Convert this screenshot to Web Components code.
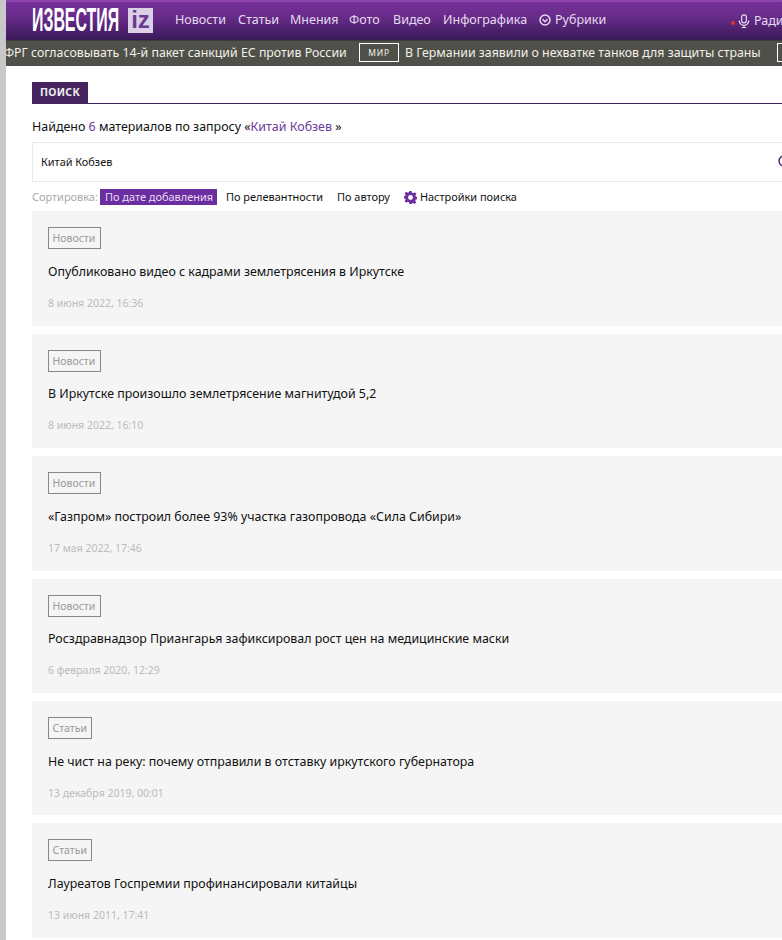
<!DOCTYPE html>
<html lang="ru">
<head>
<meta charset="utf-8">
<title>Поиск</title>
<style>
  html, body { margin: 0; height: 940px; overflow: hidden; background: #fff; }
  body { font-family: "Noto Sans", "Open Sans", sans-serif; }
</style>
</head>
<body>
<iz-page>
  <iz-header></iz-header>
  <iz-ticker></iz-ticker>
  <iz-search query="Китай Кобзев" count="6">
    <iz-card section="Новости" date="8 июня 2022, 16:36">Опубликовано видео с кадрами землетрясения в Иркутске</iz-card>
    <iz-card section="Новости" date="8 июня 2022, 16:10">В Иркутске произошло землетрясение магнитудой 5,2</iz-card>
    <iz-card section="Новости" date="17 мая 2022, 17:46">«Газпром» построил более 93% участка газопровода «Сила Сибири»</iz-card>
    <iz-card section="Новости" date="6 февраля 2020, 12:29">Росздравнадзор Приангарья зафиксировал рост цен на медицинские маски</iz-card>
    <iz-card section="Статьи" date="13 декабря 2019, 00:01">Не чист на реку: почему отправили в отставку иркутского губернатора</iz-card>
    <iz-card section="Статьи" date="13 июня 2011, 17:41">Лауреатов Госпремии профинансировали китайцы</iz-card>
  </iz-search>
</iz-page>
<script>
class IzPage extends HTMLElement {
  constructor() {
    super();
    this.attachShadow({ mode: 'open' });
    this.shadowRoot.innerHTML = `
      <style>
        :host {
          display: block;
          width: 1100px;
          min-height: 940px;
          border-left: 6px solid #c8c8c8;
          background: #fff;
        }
      </style>
      <slot></slot>`;
  }
}

class IzHeader extends HTMLElement {
  constructor() {
    super();
    this.attachShadow({ mode: 'open' });
    this.shadowRoot.innerHTML = `
      <style>
        :host {
          display: flex;
          align-items: center;
          height: 40px;
          box-sizing: border-box;
          padding-left: 26px;
          border-top: 2px solid #8d44ad;
          background: linear-gradient(#76319a 0%, #6a2c8c 35%, #3a1a58 100%);
          color: #e6daf0;
          font-size: 12.5px;
        }
        .logo {
          display: flex;
          align-items: center;
          width: 143px;
          margin-top: -2px;
        }
        .word {
          display: block;
          width: 96px;
          color: #fff;
          font: bold 30px/26px "Liberation Sans", sans-serif;
          white-space: nowrap;
          transform-origin: left center;
          transform: scaleX(.53) scaleY(1.12);
        }
        .iz {
          display: block;
          width: 25px;
          height: 25px;
          background: #dcd0e6;
          color: #6a3a90;
          font: bold 24px/24px "Liberation Sans", sans-serif;
          text-align: center;
        }
        nav { display: flex; align-items: center; margin-top: -3px; }
        nav span { white-space: nowrap; }
        .rub { display: flex; align-items: center; gap: 4px; }
        .radio { display: flex; align-items: center; gap: 4px; position: absolute; left: 731px; top: 12px; }
        .dot { width: 4px; height: 4px; border-radius: 50%; background: #e23030; margin-top: 4px; margin-right: -1px; }
      </style>
      <div class="logo"><span class="word">ИЗВЕСТИЯ</span><span class="iz">iz</span></div>
      <nav>
        <span style="width:63px">Новости</span>
        <span style="width:52px">Статьи</span>
        <span style="width:59px">Мнения</span>
        <span style="width:44px">Фото</span>
        <span style="width:50px">Видео</span>
        <span style="width:96px">Инфографика</span>
        <span class="rub">
          <svg width="12" height="12" viewBox="0 0 12 12" fill="none" stroke="#e6daf0" stroke-width="1.5"><circle cx="6" cy="6" r="5"/><path d="M3.500 5.200 6 7.700l2.500-2.500"/></svg>
          Рубрики
        </span>
      </nav>
      <div class="radio">
        <i class="dot"></i>
        <svg width="12" height="14" viewBox="0 0 12 14" fill="none" stroke="#e6daf0" stroke-width="1.2"><rect x="3.600" y=".8" width="4.800" height="8" rx="2.400"/><path d="M1.200 6.500a4.800 4.800 0 0 0 9.600 0M6 11.300v2.200M3.800 13.500h4.400"/></svg>
        <span>Радио</span>
      </div>`;
  }
}

class IzTicker extends HTMLElement {
  constructor() {
    super();
    this.attachShadow({ mode: 'open' });
    this.shadowRoot.innerHTML = `
      <style>
        :host {
          display: flex;
          align-items: center;
          height: 26px;
          overflow: hidden;
          padding-bottom: 3px;
          background: #50504a;
          border-top: 1px solid #3c3c38;
          box-sizing: border-box;
          color: #f2f0e8;
          font-size: 12.35px;
          white-space: nowrap;
        }
        .tag {
          display: block;
          flex: none;
          box-sizing: border-box;
          width: 40px;
          height: 19px;
          border: 1px solid #fff;
          font-size: 8.500px;
          line-height: 17px;
          letter-spacing: .8px;
          text-align: center;
        }
        .a { width: 355px; margin-left: -2px; flex: none; }
        .b { width: 372px; margin-left: 6px; flex: none; }
      </style>
      <span class="a">ФРГ согласовывать 14-й пакет санкций ЕС против России</span>
      <span class="tag">МИР</span>
      <span class="b">В Германии заявили о нехватке танков для защиты страны</span>
      <span class="tag">МИР</span>`;
  }
}

class IzSearch extends HTMLElement {
  constructor() {
    super();
    this.attachShadow({ mode: 'open' });
    const query = this.getAttribute('query') || '';
    const count = this.getAttribute('count') || '';
    this.shadowRoot.innerHTML = `
      <style>
        :host {
          display: block;
          padding: 16px 0 0 26px;
          color: #111;
          font-size: 12px;
        }
        .title {
          display: block;
          border-bottom: 1px solid #3d2460;
          height: 21px;
        }
        .title b {
          display: inline-block;
          height: 21px;
          padding: 0 8px;
          background: #46255f;
          color: #eee;
          font-size: 10.500px;
          line-height: 21px;
          letter-spacing: .3px;
        }
        .found { margin: 14px 0 0; line-height: 18px; font-size: 12.45px; }
        .found em { font-style: normal; color: #6b3a9c; }
        .box {
          display: flex;
          align-items: center;
          box-sizing: border-box;
          height: 40px;
          margin-top: 6px;
          padding: 0 0 1px 8px;
          border: 1px solid #e8e8e8;
          font-size: 10.900px;
        }
        .box span { width: 737px; flex: none; }
        .sort { display: flex; align-items: center; height: 16px; margin: 7px 0 6.4px; font-size: 10.950px; white-space: nowrap; }
        .sort span { position: relative; top: -1px; }
        .sort .lbl { color: #aaa; width: 68px; }
        .sort .on { background: #6a2ea0; color: #e8dcf2; padding: 0 4px 1px 5px; line-height: 15px; margin-right: 9px; top: 0; }
        .sort .it { margin-right: 14px; }
        .sort svg { margin-right: 3px; }
        .list { display: flex; flex-direction: column; gap: 8px; }
      </style>
      <div class="title"><b>ПОИСК</b></div>
      <p class="found">Найдено <em>${count}</em> материалов по запросу «<em>${query}</em> »</p>
      <div class="box"><span>${query}</span>
        <svg width="14" height="14" viewBox="0 0 14 14" fill="none" stroke="#4a2a70" stroke-width="1.5"><circle cx="6" cy="6" r="5"/><path d="m10 10 3 3"/></svg>
      </div>
      <div class="sort">
        <span class="lbl">Сортировка:</span>
        <span class="on">По дате добавления</span>
        <span class="it">По релевантности</span>
        <span class="it">По автору</span>
        <svg width="13" height="13" viewBox="0 0 24 24" fill="#6a2ea0"><path fill-rule="evenodd" d="M10 0h4l.8 3.400 2.200.9 3-1.800 2.800 2.800-1.800 3 .9 2.200 3.100.5v4l-3.400.8-.9 2.200 1.800 3-2.800 2.800-3-1.800-2.200.9L14 24h-4l-.8-3.100-2.200-.9-3 1.800-2.800-2.800 1.800-3-.9-2.200L-1 14v-4l3.100-.8.9-2.200-1.800-3L4 1.200l3 1.800 2.200-.9zM12 7.500a4.500 4.500 0 1 0 0 9 4.500 4.500 0 0 0 0-9z"/></svg>
        <span>Настройки поиска</span>
      </div>
      <div class="list"><slot></slot></div>`;
  }
}

class IzCard extends HTMLElement {
  constructor() {
    super();
    this.attachShadow({ mode: 'open' });
    const section = this.getAttribute('section') || '';
    const date = this.getAttribute('date') || '';
    this.shadowRoot.innerHTML = `
      <style>
        :host {
          display: block;
          box-sizing: border-box;
          height: 114.4px;
          padding: 16px 16px 0;
          background: #f5f5f5;
        }
        .sec {
          display: inline-block;
          box-sizing: border-box;
          height: 22px;
          padding: 0 4.500px 0 3.500px;
          border: 1px solid #888;
          color: #999;
          font-size: 10.500px;
          line-height: 20px;
        }
        .ttl { margin-top: 13.6px; color: #111; font-size: 12.400px; line-height: 18px; }
        .date { margin-top: 14px; color: #bbb; font-size: 10.500px; line-height: 16px; }
      </style>
      <div><span class="sec">${section}</span></div>
      <div class="ttl"><slot></slot></div>
      <div class="date">${date}</div>`;
  }
}

customElements.define('iz-page', IzPage);
customElements.define('iz-header', IzHeader);
customElements.define('iz-ticker', IzTicker);
customElements.define('iz-search', IzSearch);
customElements.define('iz-card', IzCard);
</script>
</body>
</html>
